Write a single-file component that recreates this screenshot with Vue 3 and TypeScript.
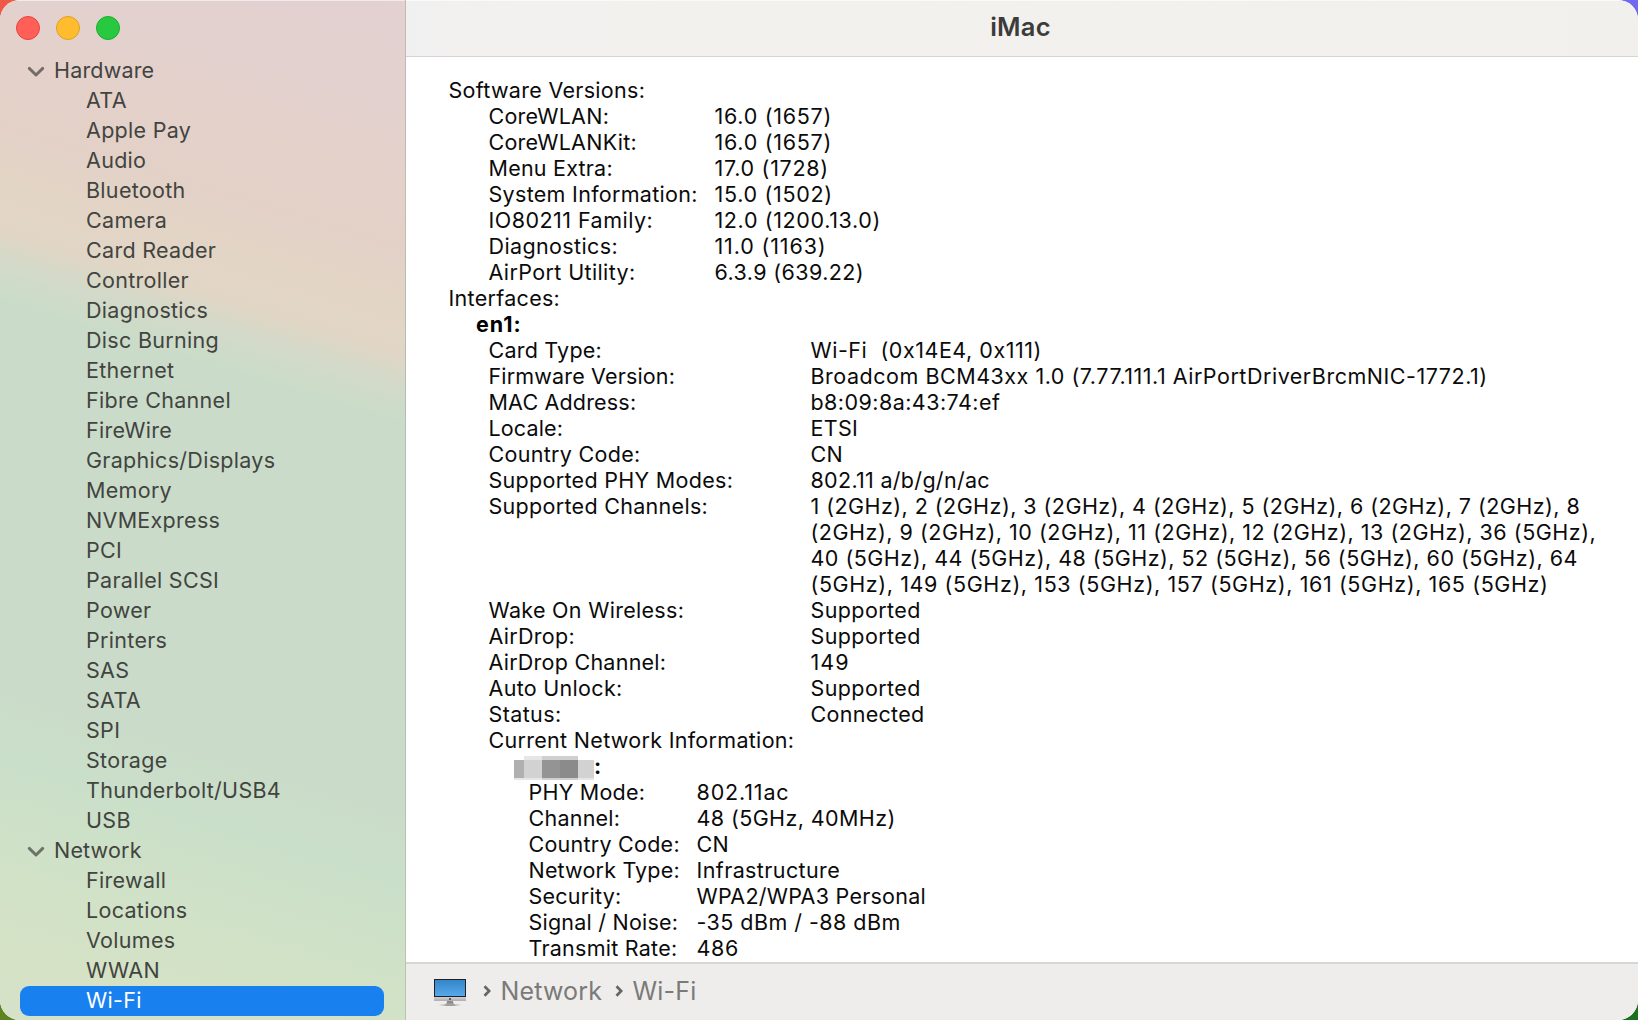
<script setup lang="ts">
interface Section { name: string; items: string[] }
interface Text { text: string; track?: number }
interface Row { label: Text; lines: Text[] }

const sections: Section[] = [
  {
    name: 'Hardware',
    items: ['ATA', 'Apple Pay', 'Audio', 'Bluetooth', 'Camera', 'Card Reader', 'Controller', 'Diagnostics',
      'Disc Burning', 'Ethernet', 'Fibre Channel', 'FireWire', 'Graphics/Displays', 'Memory', 'NVMExpress', 'PCI',
      'Parallel SCSI', 'Power', 'Printers', 'SAS', 'SATA', 'SPI', 'Storage', 'Thunderbolt/USB4', 'USB'],
  },
  { name: 'Network', items: ['Firewall', 'Locations', 'Volumes', 'WWAN', 'Wi-Fi'] },
]
const selected = 'Wi-Fi'

// Extra tracking, in pixels, over the base letter spacing of the report.
const t = (text: string, track = 0): Text => ({ text, track })
const row = (label: Text, ...lines: Text[]): Row => ({ label, lines })
const spacing = (x: Text) => (x.track ? { letterSpacing: `${(0.3 + x.track).toFixed(2)}px` } : undefined)

const software: Row[] = [
  row(t('CoreWLAN:', -0.05), t('16.0 (1657)', 0.42)),
  row(t('CoreWLANKit:', -0.05), t('16.0 (1657)', 0.42)),
  row(t('Menu Extra:', -0.08), t('17.0 (1728)', 0.42)),
  row(t('System Information:'), t('15.0 (1502)', 0.4)),
  row(t('IO80211 Family:', 0.17), t('12.0 (1200.13.0)', 0.33)),
  row(t('Diagnostics:', 0.08), t('11.0 (1163)', 0.56)),
  row(t('AirPort Utility:', 0.08), t('6.3.9 (639.22)', 0.1)),
]

const card: Row[] = [
  row(t('Card Type:', -0.08), t('Wi-Fi  (0x14E4, 0x111)', 0.23)),
  row(t('Firmware Version:', -0.14), t('Broadcom BCM43xx 1.0 (7.77.111.1 AirPortDriverBrcmNIC-1772.1)', 0.22)),
  row(t('MAC Address:', -0.12), t('b8:09:8a:43:74:ef', 0.15)),
  row(t('Locale:', -0.15), t('ETSI')),
  row(t('Country Code:'), t('CN')),
  row(t('Supported PHY Modes:'), t('802.11 a/b/g/n/ac')),
  row(
    t('Supported Channels:'),
    t('1 (2GHz), 2 (2GHz), 3 (2GHz), 4 (2GHz), 5 (2GHz), 6 (2GHz), 7 (2GHz), 8', 0.155),
    t('(2GHz), 9 (2GHz), 10 (2GHz), 11 (2GHz), 12 (2GHz), 13 (2GHz), 36 (5GHz),', 0.22),
    t('40 (5GHz), 44 (5GHz), 48 (5GHz), 52 (5GHz), 56 (5GHz), 60 (5GHz), 64', 0.18),
    t('(5GHz), 149 (5GHz), 153 (5GHz), 157 (5GHz), 161 (5GHz), 165 (5GHz)', 0.3),
  ),
  row(t('Wake On Wireless:'), t('Supported', 0.1)),
  row(t('AirDrop:'), t('Supported', 0.1)),
  row(t('AirDrop Channel:', -0.05), t('149', 0.7)),
  row(t('Auto Unlock:'), t('Supported', 0.1)),
  row(t('Status:', 0.08), t('Connected')),
]

const network: Row[] = [
  row(t('PHY Mode:', -0.06), t('802.11ac', 0.55)),
  row(t('Channel:', -0.06), t('48 (5GHz, 40MHz)', 0.1)),
  row(t('Country Code:', -0.05), t('CN')),
  row(t('Network Type:', -0.12), t('Infrastructure', 0.1)),
  row(t('Security:', -0.05), t('WPA2/WPA3 Personal', -0.05)),
  row(t('Signal / Noise:', -0.08), t('-35 dBm / -88 dBm', 0.15)),
  row(t('Transmit Rate:', -0.05), t('486', 0.4)),
]
</script>

<template>
  <div class="desktop">
    <div class="window">
      <aside class="sidebar">
        <div class="lights">
          <i class="light close"></i><i class="light minimize"></i><i class="light zoom"></i>
        </div>
        <nav>
          <template v-for="s in sections" :key="s.name">
            <div class="row group">
              <svg class="chevron" width="18" height="12" viewBox="0 0 18 12">
                <path d="M2.300 2.400 9 9l6.700-6.600" />
              </svg>
              <span>{{ s.name }}</span>
            </div>
            <div v-for="i in s.items" :key="i" class="row item" :class="{ selected: i === selected }">{{ i }}</div>
          </template>
        </nav>
      </aside>
      <main class="main">
        <header class="titlebar">iMac</header>
        <section class="report">
          <div class="line">Software Versions:</div>
          <div class="table software">
            <template v-for="r in software" :key="r.label.text">
              <span :style="spacing(r.label)">{{ r.label.text }}</span>
              <div><div v-for="l in r.lines" :key="l.text" :style="spacing(l)">{{ l.text }}</div></div>
            </template>
          </div>
          <div class="line">Interfaces:</div>
          <div class="line device">en1:</div>
          <div class="table card">
            <template v-for="r in card" :key="r.label.text">
              <span :style="spacing(r.label)">{{ r.label.text }}</span>
              <div><div v-for="l in r.lines" :key="l.text" :style="spacing(l)">{{ l.text }}</div></div>
            </template>
          </div>
          <div class="line current">Current Network Information:</div>
          <div class="line ssid">
            <svg width="80" height="24" viewBox="0 0 80 24" shape-rendering="crispEdges">
              <path fill="#b0b0b0" d="M0 4h10v18H0z" />
              <path fill="#d2d2d2" d="M10 4h18v18H10zM64 4h16v18H64z" />
              <path fill="#949494" d="M28 4h18v18H28z" />
              <path fill="#8b8b8b" d="M46 4h18v18H46z" />
              <path fill="#e6e6e6" d="M10 0h18v4H10zM0 22h28v2H0zM64 22h16v2H64z" />
              <path fill="#d0d0d0" d="M28 0h36v4H28zM28 22h36v2H28z" />
            </svg>
            <b>:</b>
          </div>
          <div class="table network">
            <template v-for="r in network" :key="r.label.text">
              <span :style="spacing(r.label)">{{ r.label.text }}</span>
              <div><div v-for="l in r.lines" :key="l.text" :style="spacing(l)">{{ l.text }}</div></div>
            </template>
          </div>
        </section>
        <footer class="pathbar">
          <svg class="imac" width="34" height="28" viewBox="0 0 34 28">
            <defs>
              <linearGradient id="screen" x1="0" y1="0" x2="0" y2="1">
                <stop offset="0" stop-color="#3585ca" /><stop offset="1" stop-color="#57a9ea" />
              </linearGradient>
              <linearGradient id="chin" x1="0" y1="0" x2="0" y2="1">
                <stop offset="0" stop-color="#d4d2d4" /><stop offset="1" stop-color="#aeacae" />
              </linearGradient>
              <radialGradient id="shade"><stop offset="0" stop-color="#777" /><stop offset="1" stop-color="#999" stop-opacity="0" /></radialGradient>
            </defs>
            <ellipse cx="17" cy="26" rx="13" ry="1.300" fill="url(#shade)" />
            <path fill="#8c8b8c" d="M14 22h6l.5 3 2 1.500h-11l2-1.500z" />
            <path fill="#aaa" d="M13.500 24.500h7l1.500 1.200H12z" />
            <path fill="#202124" d="M1 0h32v18H1z" />
            <path fill="url(#screen)" d="M2 1h30v16H2z" />
            <path fill="url(#chin)" d="M1 18h32v4H1z" />
            <circle cx="17" cy="20" r="1.100" fill="#444" />
          </svg>
          <svg class="sep first" width="8" height="12" viewBox="0 0 8 12"><path d="M1.500 1.200 6.200 6l-4.700 4.800" /></svg>
          <span>Network</span>
          <svg class="sep" width="8" height="12" viewBox="0 0 8 12"><path d="M1.500 1.200 6.200 6l-4.700 4.800" /></svg>
          <span class="leaf">Wi-Fi</span>
        </footer>
      </main>
    </div>
  </div>
</template>

<style>
body { margin: 0; overflow: hidden; }
</style>

<style scoped>
.desktop {
  width: 1638px;
  height: 1020px;
  background:
    linear-gradient(#ef5a48, #ef5a48) 0 0 / 50% 50% no-repeat,
    linear-gradient(#7068f0, #7068f0) 100% 0 / 50% 50% no-repeat,
    linear-gradient(#5c8420, #5c8420) 0 100% / 50% 50% no-repeat,
    linear-gradient(#1c701f, #1c701f) 100% 100% / 50% 50% no-repeat;
  font-family: Inter, "Noto Sans", sans-serif;
  font-size: 21.500px;
  letter-spacing: 0.300px;
}
.window {
  display: flex;
  height: 1020px;
  border-radius: 20px;
  overflow: hidden;
  background: #fff;
}
.sidebar {
  box-sizing: border-box;
  width: 406px;
  flex: none;
  border-right: 1px solid rgba(0, 0, 0, 0.13);
  box-shadow: inset 0 1px rgba(255, 255, 255, 0.55);
  color: #42443f;
  background: linear-gradient(197deg, #e3d1d2 0, #e3d1cf 9%, #e4d1ca 16%, #e3d1c7 22%, #e3d5c6 27%, #e1d6c6 31%, #d4d9c8 33.500%, #cadcc9 37%, #cadbc9 69%, #cadfc9 77%, #d1e2c7 87%, #d5e2c6 94%, #d5e2c7 100%);
}
.lights {
  display: flex;
  gap: 16px;
  height: 40px;
  padding: 16px 0 0 16px;
}
.light {
  box-sizing: border-box;
  width: 24px;
  height: 24px;
  border-radius: 50%;
}
.close { background: #ff5f57; border: 1px solid #e2463f; }
.minimize { background: #febc2e; border: 1px solid #dfa023; }
.zoom { background: #28c840; border: 1px solid #1dad2b; }
.row {
  height: 30px;
  line-height: 29px;
  white-space: nowrap;
}
.group {
  display: flex;
  align-items: flex-start;
  padding-left: 27px;
  letter-spacing: 0.180px;
}
.chevron {
  width: 18px;
  margin: 10px 9px 0 0;
  fill: none;
  stroke: currentColor;
  stroke-width: 2.900;
  stroke-linecap: round;
  stroke-linejoin: round;
  opacity: 0.7;
}
.item {
  margin: 0 21px 0 20px;
  padding-left: 66px;
}
.selected {
  border-radius: 9px;
  background: #1980f0;
  color: #fff;
}
.main {
  display: flex;
  flex-direction: column;
  flex: 1;
  min-width: 0;
  height: 1020px;
}
.titlebar {
  box-sizing: border-box;
  height: 57px;
  flex: none;
  border-top: 1px solid #fafaf9;
  border-bottom: 1px solid #d6d5d4;
  background: linear-gradient(90deg, #f1f0f0, #f3f1ee 18%, #f2f0ed);
  color: #3c3c3b;
  font-size: 25.500px;
  font-weight: 600;
  line-height: 52px;
  letter-spacing: 0.200px;
  text-align: center;
  padding-right: 3px;
}
.report {
  flex: 1;
  min-height: 0;
  overflow: hidden;
  padding: 20px 0 0 42.500px;
  color: #0b0b0b;
  line-height: 26px;
}
.report span, .report div { white-space: pre; }
.line { height: 26px; }
.table { display: grid; }
.software { grid-template-columns: 226px 1fr; margin-left: 40px; }
.card { grid-template-columns: 322px 1fr; margin-left: 40px; }
.network { grid-template-columns: 168px 1fr; margin-left: 80px; }
.device { margin-left: 27.500px; font-weight: 700; color: #000; letter-spacing: 1px; }
.current { margin-left: 40px; }
.ssid { display: flex; margin-left: 65.500px; }
.ssid svg { margin-top: 3px; }
.ssid b { line-height: 26px; }
.pathbar {
  box-sizing: border-box;
  display: flex;
  align-items: center;
  height: 58px;
  flex: none;
  padding-left: 27px;
  border-top: 2px solid #d7d6d5;
  background: #eeedeb;
  color: #7b7a79;
  font-size: 25px;
  letter-spacing: 0.150px;
}
.pathbar span { margin-top: -2px; }
.imac { margin-top: 2px; }
.sep {
  fill: none;
  stroke: #666;
  stroke-width: 2.700;
  margin: -2px 9.500px 0 13px;
}
.sep.first { margin-left: 16px; }
.leaf { letter-spacing: 0.200px; }
</style>
